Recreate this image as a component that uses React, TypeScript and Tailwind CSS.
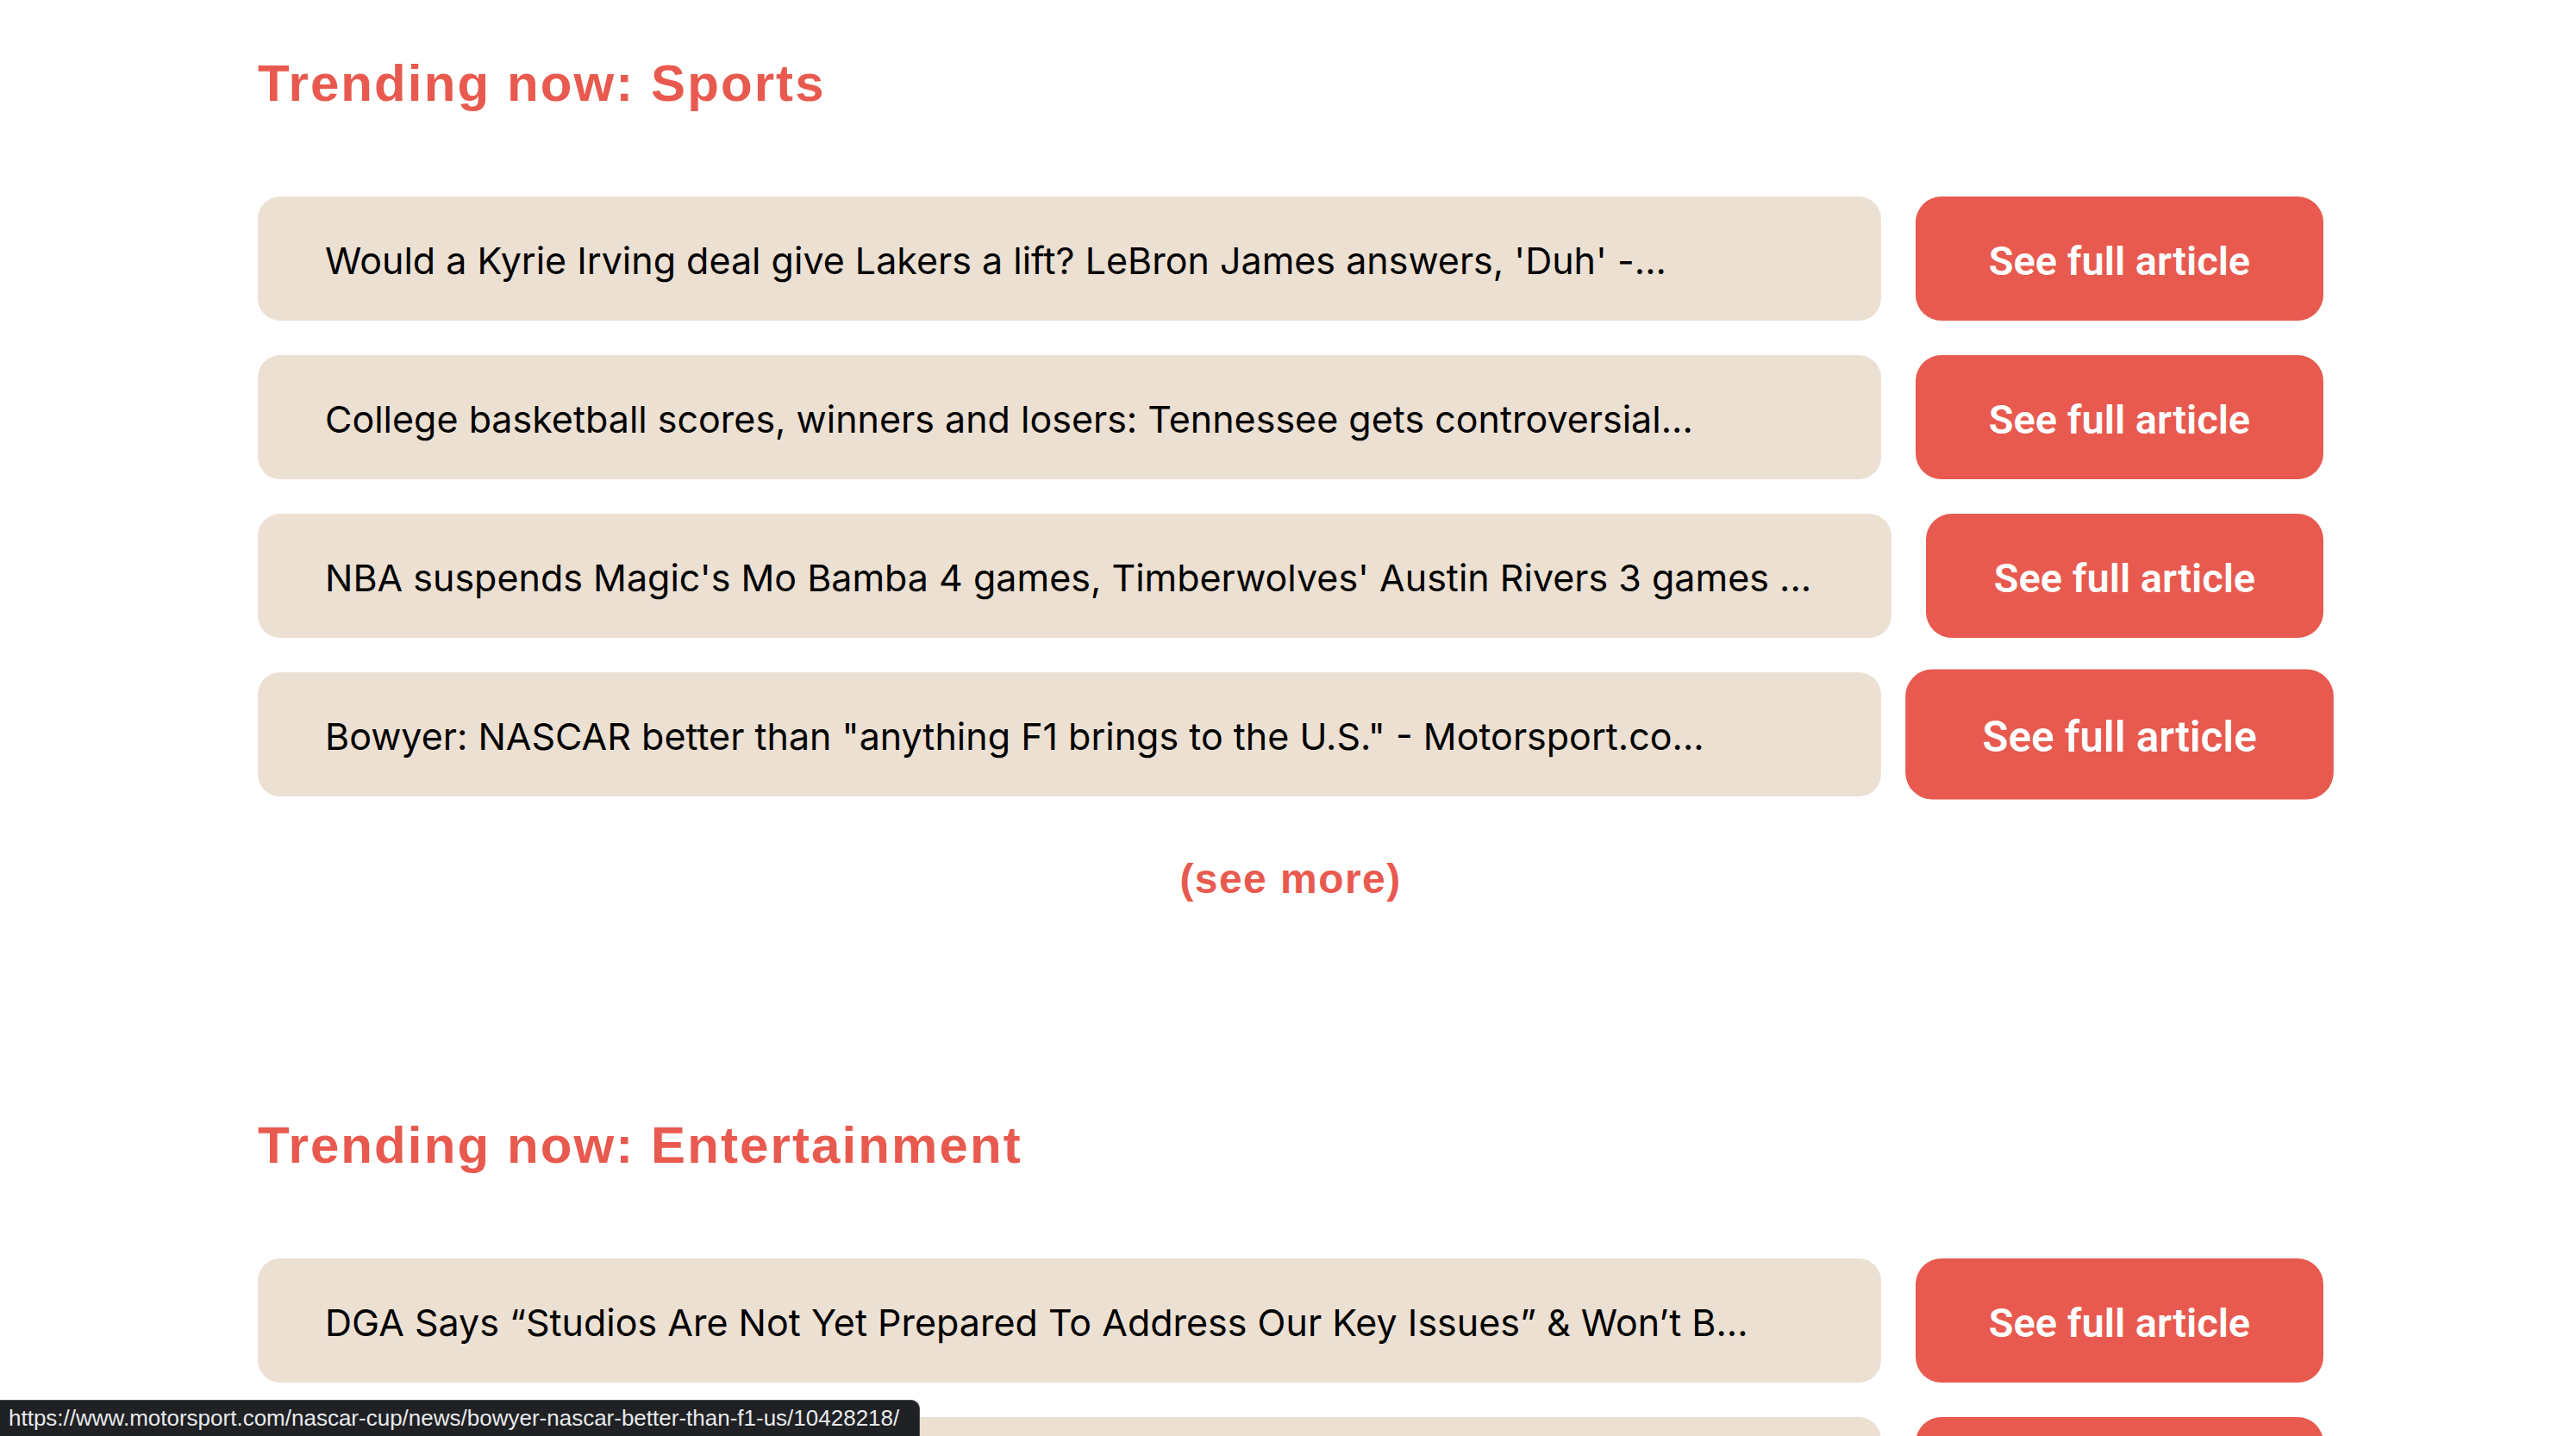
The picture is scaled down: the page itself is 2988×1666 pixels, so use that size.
import React from 'react'

type Article = { title: string; url: string; btn?: string; hover?: boolean }

const sports: Article[] = [
  { title: "Would a Kyrie Irving deal give Lakers a lift? LeBron James answers, 'Duh' -...", url: '#' },
  { title: 'College basketball scores, winners and losers: Tennessee gets controversial...', url: '#' },
  { title: "NBA suspends Magic's Mo Bamba 4 games, Timberwolves' Austin Rivers 3 games ...", url: '#', btn: 'w-[461px]' },
  { title: 'Bowyer: NASCAR better than "anything F1 brings to the U.S." - Motorsport.co...', url: 'https://www.motorsport.com/nascar-cup/news/bowyer-nascar-better-than-f1-us/10428218/', hover: true },
]

const entertainment: Article[] = [
  { title: 'DGA Says \u201CStudios Are Not Yet Prepared To Address Our Key Issues\u201D & Won\u2019t B...', url: '#' },
  { title: 'Box office: weekend preview as new releases head into theaters nationwide...', url: '#' },
]

const ArticleRow = ({ a }: { a: Article }) => (
  <div className="flex items-center gap-[40px]">
    <div className="flex h-[144px] min-w-0 flex-1 items-center rounded-[26px] bg-[#ece0d3] pl-[78px] pt-[4px]">
      <span className="whitespace-nowrap font-['Inter',sans-serif] text-[43px] text-black">{a.title}</span>
    </div>
    <a
      href={a.url}
      className={`flex h-[144px] shrink-0 items-center justify-center rounded-[30px] bg-[#e85a4f] pt-[6px] font-['Roboto',sans-serif] text-[47px] font-semibold text-white ${a.btn ?? 'w-[473px]'} ${a.hover ? 'scale-105' : ''}`}
    >
      See full article
    </a>
  </div>
)

const Section = ({ title, items, more }: { title: string; items: Article[]; more?: boolean }) => (
  <section>
    <h2 className="font-['Liberation_Sans',Arial,sans-serif] text-[60px] leading-[72px] font-bold tracking-[0.035em] text-[#e85a4f]">
      {title}
    </h2>
    <div className="mt-[95px] flex flex-col gap-[40px]">
      {items.map((a, i) => <ArticleRow key={i} a={a} />)}
    </div>
    {more && (
      <div className="mt-[67px] text-center font-['Liberation_Sans',Arial,sans-serif] text-[48px] leading-[58px] font-bold tracking-[0.03em] text-[#e85a4f]">
        (see more)
      </div>
    )}
  </section>
)

export default function App() {
  return (
    <div className="relative h-screen overflow-hidden bg-white">
      <div className="ml-[299px] flex w-[2396px] flex-col gap-[244px] pt-[61px]">
        <Section title="Trending now: Sports" items={sports} more />
        <Section title="Trending now: Entertainment" items={entertainment} />
      </div>
      <div className="absolute bottom-0 left-0 flex h-[42px] w-[1067px] items-center rounded-tr-[10px] border-t border-r border-[#4a4b4f] bg-[#202124] pl-[10px] font-['Liberation_Sans',Arial,sans-serif] text-[26px] text-[#e8eaed]">
        https://www.motorsport.com/nascar-cup/news/bowyer-nascar-better-than-f1-us/10428218/
      </div>
    </div>
  )
}
